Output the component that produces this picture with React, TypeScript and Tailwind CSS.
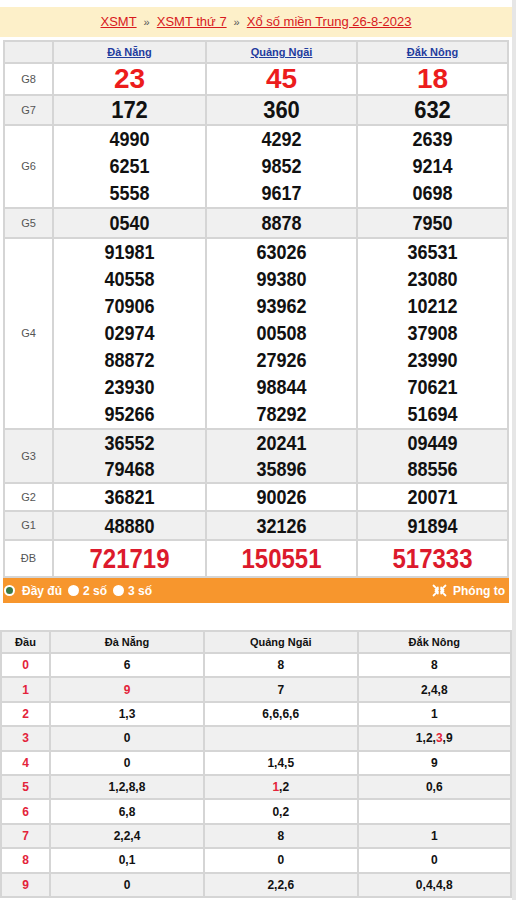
const PROVINCES = ['Đà Nẵng', 'Quảng Ngãi', 'Đắk Nông'];

type Prize = {
  label: string;
  vals: string[][];
  size: string;
  h?: string;
  line?: string;
  gray?: boolean;
};

const PRIZES: Prize[] = [
  { label: 'G8', vals: [['23'], ['45'], ['18']], size: 'text-[28px] text-[#ec1c1c]', h: 'h-[30px]' },
  { label: 'G7', vals: [['172'], ['360'], ['632']], size: 'text-[22px] scale-y-[1.08]', h: 'h-[28px]', gray: true },
  {
    label: 'G6',
    vals: [
      ['4990', '6251', '5558'],
      ['4292', '9852', '9617'],
      ['2639', '9214', '0698'],
    ],
    size: 'text-[18px] scale-y-[1.15]',
    line: 'h-[27px] leading-[27px]',
  },
  { label: 'G5', vals: [['0540'], ['8878'], ['7950']], size: 'text-[18px] scale-y-[1.15]', h: 'h-[28px]', gray: true },
  {
    label: 'G4',
    vals: [
      ['91981', '40558', '70906', '02974', '88872', '23930', '95266'],
      ['63026', '99380', '93962', '00508', '27926', '98844', '78292'],
      ['36531', '23080', '10212', '37908', '23990', '70621', '51694'],
    ],
    size: 'text-[18px] scale-y-[1.15]',
    line: 'h-[27px] leading-[27px]',
  },
  {
    label: 'G3',
    vals: [
      ['36552', '79468'],
      ['20241', '35896'],
      ['09449', '88556'],
    ],
    size: 'text-[18px] scale-y-[1.15]',
    line: 'h-[26px] leading-[26px]',
    gray: true,
  },
  { label: 'G2', vals: [['36821'], ['90026'], ['20071']], size: 'text-[18px] scale-y-[1.15]', h: 'h-[26px]' },
  { label: 'G1', vals: [['48880'], ['32126'], ['91894']], size: 'text-[18px] scale-y-[1.15]', h: 'h-[27px]', gray: true },
  { label: 'ĐB', vals: [['721719'], ['150551'], ['517333']], size: 'text-[24px] scale-y-[1.16] text-[#dc1a2c]', h: 'h-[35px]' },
];

// "!" marks a digit shown in red
const LOTO: string[][] = [
  ['6', '8', '8'],
  ['!9', '7', '2,4,8'],
  ['1,3', '6,6,6,6', '1'],
  ['0', '', '1,2,!3,9'],
  ['0', '1,4,5', '9'],
  ['1,2,8,8', '!1,2', '0,6'],
  ['6,8', '0,2', ''],
  ['2,2,4', '8', '1'],
  ['0,1', '0', '0'],
  ['0', '2,2,6', '0,4,4,8'],
];

function LotoCell({ value }: { value: string }) {
  if (!value) return null;
  const parts = value.split(',');
  return (
    <span className="scale-y-[1.1]">
      {parts.map((p, i) => (
        <span key={i}>
          <span className={p.startsWith('!') ? 'text-[#e3233a]' : ''}>{p.replace('!', '')}</span>
          {i < parts.length - 1 && ','}
        </span>
      ))}
    </span>
  );
}

function ShrinkIcon() {
  return (
    <svg width="15" height="13" viewBox="0 0 15 13" fill="none" stroke="white" strokeWidth="1.8" strokeLinecap="round" strokeLinejoin="round">
      <path d="M1.5 1.5 5.5 5.3M1.5 11.5 5.5 7.7" />
      <path d="M13.5 1.5 9.5 5.3M13.5 11.5 9.5 7.7" />
      <path d="M3.5 5.6h2.3V3.4M3.5 7.4h2.3v2.2" />
      <path d="M11.5 5.6H9.2V3.4M11.5 7.4H9.2v2.2" />
    </svg>
  );
}

export default function App() {
  return (
    <div className="flex w-[516px] h-[900px] overflow-hidden bg-white font-[family-name:Liberation_Sans,Arial,sans-serif]">
      <div className="w-[512px] shrink-0 pt-[7px]">
        {/* breadcrumb */}
        <div className="h-[30px] bg-[#fdf0c9] flex items-center justify-center text-[13px] text-[#d8191d]">
          <a className="underline">XSMT</a>
          <span className="mx-[7px] text-[11px] text-[#555]">»</span>
          <a className="underline">XSMT thứ 7</a>
          <span className="mx-[7px] text-[11px] text-[#555]">»</span>
          <a className="underline">Xổ số miền Trung 26-8-2023</a>
        </div>

        {/* results table */}
        <div className="mt-[3px] mx-[3px] bg-[#d5d5d5] p-[2px] grid grid-cols-[47px_151px_1fr_1fr] gap-[2px]">
          <div className="bg-[#efefef] h-[20px]" />
          {PROVINCES.map(p => (
            <div key={p} className="bg-[#efefef] h-[20px] flex items-center justify-center">
              <a className="text-[11px] font-bold text-[#1f3c9e] underline">{p}</a>
            </div>
          ))}
          {PRIZES.map(row => {
            const bg = row.gray ? 'bg-[#f0f0f0]' : 'bg-white';
            return (
              <div key={row.label} className="contents">
                <div className={`${bg} ${row.h ?? ''} flex items-center justify-center text-[11px] text-[#555]`}>
                  {row.label}
                </div>
                {row.vals.map((col, ci) => (
                  <div
                    key={ci}
                    className={`${bg} ${row.h ?? ''} flex flex-col items-center justify-center font-bold text-[#111]`}
                  >
                    {col.map(n => (
                      <div key={n} className={`${row.line ?? 'leading-none'} ${row.size}`}>
                        {n}
                      </div>
                    ))}
                  </div>
                ))}
              </div>
            );
          })}
        </div>

        {/* options bar */}
        <div className="mx-[3px] h-[25px] bg-[#f7962d] flex items-center justify-between pl-[1px] pr-[4px] text-[12px] font-bold text-white">
          <div className="flex items-center">
            <span className="w-[11px] h-[11px] rounded-full bg-white flex items-center justify-center">
              <span className="w-[7px] h-[7px] rounded-full bg-[#3b7a45]" />
            </span>
            <span className="ml-[7px]">Đầy đủ</span>
            <span className="ml-[6px] w-[11px] h-[11px] rounded-full bg-white" />
            <span className="ml-[4px]">2 số</span>
            <span className="ml-[6px] w-[11px] h-[11px] rounded-full bg-white" />
            <span className="ml-[4px]">3 số</span>
          </div>
          <div className="flex items-center gap-[6px]">
            <ShrinkIcon />
            <span>Phóng to</span>
          </div>
        </div>

        {/* loto table */}
        <div className="mt-[27px] bg-[#d5d5d5] p-[2px] grid grid-cols-[47px_152px_1fr_1fr] gap-[2px] text-[12px] font-bold text-[#111]">
          {['Đầu', ...PROVINCES].map(h => (
            <div key={h} className="bg-[#efefef] h-[20px] flex items-center justify-center text-[11px]">
              {h}
            </div>
          ))}
          {LOTO.map((row, ri) => {
            const bg = ri % 2 === 1 ? 'bg-[#f0f0f0]' : 'bg-white';
            return (
              <div key={ri} className="contents">
                <div className={`${bg} h-[22.4px] flex items-center justify-center text-[#e3233a]`}>{ri}</div>
                {row.map((v, ci) => (
                  <div key={ci} className={`${bg} h-[22.4px] flex items-center justify-center`}>
                    <LotoCell value={v} />
                  </div>
                ))}
              </div>
            );
          })}
        </div>
      </div>
      <div className="flex-1 bg-[#e6e6e6]" />
    </div>
  );
}
